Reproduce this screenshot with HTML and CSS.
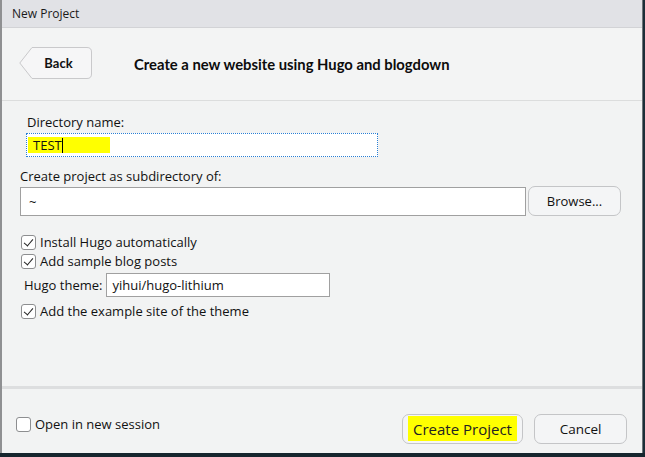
FILE: index.html
```html
<!DOCTYPE html>
<html>
<head>
<meta charset="utf-8">
<link rel="stylesheet" href="styles.css">
</head>
<body>
<div class="screen">
  <div class="window">
    <div class="titlebar">New Project</div>
    <div class="header">
      <button class="back">
        <svg class="back-shape" width="73" height="32" viewBox="0 0 73 32"><path d="M13 0.5 H68 Q72.5 0.5 72.5 5 V27 Q72.5 31.5 68 31.5 H13 L0.8 16 Z" fill="#f6f6f7" stroke="#c9c9cb" stroke-width="1"/></svg>
        <span class="back-label">Back</span>
      </button>
      <h1 class="title">Create a new website using Hugo and blogdown</h1>
    </div>
    <div class="content">
      <label class="lbl lbl-dir">Directory name:</label>
      <div class="input input-dir"><span class="hl">TEST<span class="caret"></span></span></div>
      <label class="lbl lbl-sub">Create project as subdirectory of:</label>
      <div class="row-browse">
        <div class="input input-sub">~</div>
        <button class="btn btn-browse">Browse...</button>
      </div>
      <div class="check-row cr1"><span class="cb checked"></span><span>Install Hugo automatically</span></div>
      <div class="check-row cr2"><span class="cb checked"></span><span>Add sample blog posts</span></div>
      <div class="theme-row"><span>Hugo theme:</span><div class="input input-theme">yihui/hugo-lithium</div></div>
      <div class="check-row cr3"><span class="cb checked"></span><span>Add the example site of the theme</span></div>
    </div>
    <div class="footer">
      <div class="check-row foot-check"><span class="cb"></span><span>Open in new session</span></div>
      <div class="foot-btns">
        <button class="btn btn-create"><span class="hl-create">Create Project</span></button>
        <button class="btn btn-cancel">Cancel</button>
      </div>
    </div>
  </div>
  <div class="right-edge"></div>
</div>
<div class="taskbar"></div>
</body>
</html>
```
FILE: styles.css
```css
* { box-sizing: border-box; }
html, body { margin: 0; padding: 0; }
body {
  width: 645px;
  height: 457px;
  overflow: hidden;
  background: #16262e;
  font-family: "Open Sans", "Noto Sans", sans-serif;
  font-size: 13px;
  color: #111;
}
.screen { display: flex; height: 453px; }
.window {
  width: 642px;
  height: 453px;
  display: flex;
  flex-direction: column;
  background: #f2f3f3;
  border-left: 2px solid #8f9092;
}
.right-edge { width: 3px; background: #1c2e38; border-left: 1px solid #6c7478; }
.titlebar {
  height: 28px;
  background: #e1e2e6;
  border-bottom: 1px solid #d2d3d6;
  font-size: 12px;
  padding: 5px 0 0 10px;
  color: #1a1a1a;
}
.header {
  height: 73px;
  background: #f3f4f4;
  border-bottom: 1px solid #dcdddd;
  display: flex;
  align-items: flex-start;
  padding: 19px 0 0 17px;
}
.back {
  position: relative;
  width: 73px;
  height: 32px;
  border: 0;
  background: transparent;
  padding: 0;
  font: inherit;
}
.back-shape { position: absolute; left: 0; top: 0; }
.back-label {
  position: relative;
  font-family: "Lato", "Open Sans", sans-serif;
  font-weight: 700;
  font-size: 13px;
  padding-left: 6px;
  color: #111;
}
.title {
  margin: 1px 0 0 42px;
  font-family: "Lato", "Open Sans", sans-serif;
  font-size: 14.8px;
  font-weight: 700;
  line-height: 32px;
  color: #0c0c0c;
}
.content {
  flex: 1;
  display: flex;
  flex-direction: column;
  padding: 12px 0 0 18px;
  border-bottom: 3px solid #dddedf;
}
.lbl { display: block; line-height: 18px; }
.lbl-dir { margin-left: 7px; }
.input {
  background: #fff;
  border: 1px solid #a0a0a0;
  display: flex;
  align-items: center;
  padding-left: 6px;
}
.input-dir {
  margin: 2px 0 0 6px;
  width: 352px;
  height: 24px;
  border: 1px dotted #2a7fd4;
  padding-left: 1px;
}
.hl {
  background: #ffff00;
  width: 82px;
  height: 16px;
  display: flex;
  align-items: center;
  padding-left: 5px;
  line-height: 16px;
}
.caret { width: 1px; height: 15px; background: #000; margin-left: 0; }
.lbl-sub { margin-top: 10px; }
.row-browse { display: flex; gap: 2px; margin-top: 2px; }
.input-sub { width: 506px; height: 29px; padding-left: 8px; }
.btn {
  font: inherit;
  background: #f4f5f6;
  border: 1px solid #c4c5c7;
  border-radius: 7px;
  color: #111;
  padding: 0;
}
.btn-browse { width: 93px; height: 30px; margin-top: -1px; }
.check-row { display: flex; align-items: center; gap: 4px; height: 19px; line-height: 19px; }
.cr1 { margin-top: 17px; margin-left: 1px; }
.cr2 { margin-left: 1px; }
.cb {
  width: 15px;
  height: 15px;
  border: 1px solid #8d8e90;
  border-radius: 3px;
  background: #fff;
  position: relative;
  flex: none;
}
.cb.checked::after {
  content: "";
  position: absolute;
  left: 4px;
  top: 1px;
  width: 4px;
  height: 8px;
  border: solid #222;
  border-width: 0 1.5px 1.5px 0;
  transform: rotate(40deg);
}
.theme-row { display: flex; align-items: center; gap: 4px; margin: 2px 0 5px 4px; }
.input-theme { width: 224px; height: 24px; padding-left: 5px; }
.cr3 { margin-left: 1px; }
.footer {
  height: 64px;
  display: flex;
  align-items: flex-start;
  justify-content: space-between;
  padding: 25px 15px 0 14px;
}
.foot-check { margin-top: 1px; gap: 4px; }
.foot-btns { display: flex; gap: 11px; }
.btn-create, .btn-cancel { height: 30px; }
.btn-create { width: 121px; font-size: 14px; }
.hl-create { background: #ffff00; padding: 3px 5px 2px; color: #222; font-size: 15px; }
.btn-cancel { width: 93px; font-size: 13.5px; }
.taskbar { height: 4px; background: #16262e; }
```
